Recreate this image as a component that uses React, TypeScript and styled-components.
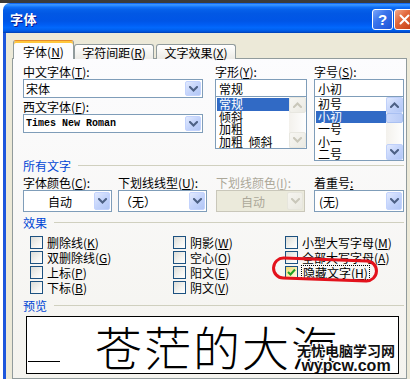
import React from "react";
import styled, { createGlobalStyle, css } from "styled-components";

const FONT = `"Noto Sans CJK SC", "Noto Sans", sans-serif`;

const GlobalStyle = createGlobalStyle`
  html, body { margin: 0; padding: 0; background: #ffffff; }
  body { font-family: ${FONT}; font-size: 12px; color: #000; }
  #root { width: 410px; height: 379px; overflow: hidden; }
  * { box-sizing: border-box; }
`;

const Screen = styled.div`
  display: flex;
  width: 410px;
  height: 379px;
  overflow: hidden;
  border-top: 3px solid #3b3b3b;
  background: #fff;
`;

const Backdrop = styled.div`
  flex: 0 0 3px;
  background: #fff;
`;

const Window = styled.div`
  flex: 0 0 420px;
  display: flex;
  flex-direction: column;
`;

const TitleBar = styled.div`
  flex: 0 0 30px;
  display: flex;
  align-items: center;
  padding: 0 8px 0 7px;
  border-radius: 7px 7px 0 0;
  background: linear-gradient(
    to bottom,
    #0058ee 0%,
    #3a93ff 5%,
    #2b8aff 9%,
    #1070f8 14%,
    #0660ea 22%,
    #0258e4 35%,
    #0055e6 60%,
    #005df3 72%,
    #0268fc 82%,
    #0060ef 90%,
    #0050d4 96%,
    #003cae 100%
  );
`;

const Title = styled.span`
  color: #fff;
  font: bold 13px ${FONT};
  text-shadow: 1px 1px 0 #0a1a8f;
  letter-spacing: 0.5px;
`;

const Caption = styled.div`
  margin-left: auto;
  display: flex;
  gap: 1px;
  margin-top: 2px;
`;

const CaptionButton = styled.div<{ $kind: "help" | "close" }>`
  width: 21px;
  height: 21px;
  border: 1px solid #ffffff;
  border-radius: 3px;
  display: flex;
  align-items: center;
  justify-content: center;
  color: #fff;
  font: bold 15px "Liberation Sans", sans-serif;
  background: ${(p) =>
    p.$kind === "help"
      ? "linear-gradient(135deg, #7aa6fa 0%, #3a74ec 40%, #1d52d6 100%)"
      : "linear-gradient(135deg, #f3a88a 0%, #e2673a 40%, #c23b12 100%)"};
`;

const Body = styled.div`
  flex: 1;
  background: #ece9d8;
  border-left: 3px solid #1d57dc;
  padding: 7px 0 0 6px;
  display: flex;
  flex-direction: column;
`;

const TabStrip = styled.div`
  display: flex;
  align-items: flex-end;
  height: 19px;
  padding-left: 1px;
  margin-bottom: -1px;
  position: relative;
  z-index: 1;
`;

const Tab = styled.div<{ $active?: boolean; $w: number; $gap?: number }>`
  width: ${(p) => p.$w}px;
  margin-left: ${(p) => p.$gap ?? 0}px;
  display: flex;
  align-items: center;
  justify-content: center;
  border: 1px solid #919b9c;
  border-bottom: none;
  border-radius: 3px 3px 0 0;
  white-space: nowrap;
  line-height: 13px;
  ${(p) =>
    p.$active
      ? css`
          height: 19px;
          padding-top: 2px;
          background: #fcfcfe;
          border-top: 1px solid #e68b2c;
          box-shadow: inset 0 2px 0 #ffc73c;
        `
      : css`
          height: 15px;
          background: linear-gradient(#ffffff, #ecebe6);
        `}
`;

const Key = styled.span`
  text-decoration: underline;
`;

const Panel = styled.div`
  width: 395px;
  flex: 1;
  border: 1px solid #919b9c;
  background: linear-gradient(#fcfcfe, #f4f3ee);
  padding: 6px 2px 0 10px;
  display: flex;
  flex-direction: column;
`;

const Row = styled.div`
  display: flex;
  align-items: flex-start;
`;

const Col = styled.div<{ $w: number; $mr?: number }>`
  flex: 0 0 ${(p) => p.$w}px;
  width: ${(p) => p.$w}px;
  margin-right: ${(p) => p.$mr ?? 0}px;
  display: flex;
  flex-direction: column;
`;

const Label = styled.div<{ $disabled?: boolean; $mt?: number }>`
  height: 13px;
  line-height: 13px;
  margin-top: ${(p) => p.$mt ?? 0}px;
  margin-bottom: 1px;
  color: ${(p) => (p.$disabled ? "#aca899" : "#000")};
  white-space: nowrap;
`;

const Combo = styled.div<{ $h: number; $disabled?: boolean }>`
  height: ${(p) => p.$h}px;
  display: flex;
  align-items: stretch;
  border: 1px solid ${(p) => (p.$disabled ? "#c9c7ba" : "#7f9db9")};
  background: ${(p) => (p.$disabled ? "#ebeadb" : "#fff")};
  padding: 1px;
`;

const ComboValue = styled.div<{ $center?: boolean; $mono?: boolean; $disabled?: boolean; $pl?: number }>`
  flex: 1;
  display: flex;
  align-items: center;
  justify-content: ${(p) => (p.$center ? "center" : "flex-start")};
  padding-left: ${(p) => p.$pl ?? 1}px;
  white-space: nowrap;
  color: ${(p) => (p.$disabled ? "#aca899" : "#000")};
  ${(p) =>
    p.$mono &&
    css`
      font-family: "Liberation Mono", monospace;
      font-size: 10px;
      font-weight: bold;
    `}
`;

const DropButton = styled.div<{ $disabled?: boolean }>`
  width: 16px;
  display: flex;
  align-items: center;
  justify-content: center;
  border-radius: 2px;
  border: 1px solid ${(p) => (p.$disabled ? "#e6e5dc" : "#c3d3fd")};
  background: ${(p) =>
    p.$disabled
      ? "linear-gradient(135deg, #f6f5f0, #e9e8e0)"
      : "linear-gradient(135deg, #e2eafe 0%, #c4d4fb 50%, #b1c6f5 100%)"};
`;

const TextBox = styled.div`
  height: 18px;
  border: 1px solid #7f9db9;
  background: #fff;
  display: flex;
  align-items: center;
  padding-left: 3px;
`;

const ListBox = styled.div<{ $h: number }>`
  height: ${(p) => p.$h}px;
  border: 1px solid #7f9db9;
  border-top: none;
  background: #fff;
  display: flex;
  padding: 0 0 0 1px;
  overflow: hidden;
`;

const Items = styled.div`
  flex: 1;
  display: flex;
  flex-direction: column;
  padding-top: 1px;
`;

const Item = styled.div<{ $selected?: boolean }>`
  height: 12.5px;
  line-height: 12.5px;
  padding-left: 2px;
  white-space: pre;
  background: ${(p) => (p.$selected ? "#316ac5" : "transparent")};
  color: ${(p) => (p.$selected ? "#fff" : "#000")};
`;

const ScrollBar = styled.div`
  width: 17px;
  display: flex;
  flex-direction: column;
  background: linear-gradient(to right, #f3f1ec, #fefefe);
`;

const ScrollArrow = styled.div<{ $disabled?: boolean }>`
  height: 16px;
  flex: 0 0 16px;
  display: flex;
  align-items: center;
  justify-content: center;
  border-radius: 2px;
  border: 1px solid ${(p) => (p.$disabled ? "#e8e7e0" : "#bfd0fa")};
  background: ${(p) =>
    p.$disabled
      ? "linear-gradient(135deg, #f7f6f2, #ebeae3)"
      : "linear-gradient(135deg, #e2eafe 0%, #c4d4fb 50%, #b1c6f5 100%)"};
`;

const ScrollThumb = styled.div`
  height: 10px;
  border-radius: 2px;
  border: 1px solid #a9c0f2;
  background: linear-gradient(to right, #cad8fb, #b9cbf6);
`;

const ScrollTrack = styled.div`
  flex: 1;
`;

const Heading = styled.div<{ $mt: number }>`
  display: flex;
  align-items: center;
  height: 13px;
  line-height: 13px;
  margin-top: ${(p) => p.$mt}px;
  color: #0046d5;
  white-space: nowrap;
`;

const HeadingRule = styled.div`
  flex: 1;
  height: 1px;
  margin-left: 7px;
  background: #d0d0bf;
`;

const EffectsGrid = styled.div`
  display: grid;
  grid-template-columns: 143px 112px 1fr;
  grid-template-rows: repeat(4, 15px);
  grid-auto-flow: column;
  margin-top: 6px;
  padding-left: 7px;
`;

const CheckItem = styled.div`
  position: relative;
  display: flex;
  align-items: center;
  gap: 4px;
  white-space: nowrap;
  line-height: 13px;
`;

const Box = styled.span<{ $checked?: boolean }>`
  flex: 0 0 13px;
  width: 13px;
  height: 13px;
  border: 1px solid #1c5180;
  display: flex;
  align-items: center;
  justify-content: center;
  background: ${(p) =>
    p.$checked
      ? "linear-gradient(135deg, #f2d86c 0%, #fbf2c0 60%, #fffbe6 100%)"
      : "linear-gradient(135deg, #dcdcd7 0%, #f4f4f1 60%, #ffffff 100%)"};
`;

const Focus = styled.span`
  outline: 1px dotted #000;
  outline-offset: 0px;
  padding: 0 1px;
`;

const RedMark = styled.div`
  position: absolute;
  left: -13px;
  top: -7px;
  width: 106px;
  height: 23px;
  border: 3px solid #e3121c;
  border-radius: 12px;
  transform: rotate(2deg);
  pointer-events: none;
`;

const PreviewBox = styled.div`
  position: relative;
  margin: 4px 0 0 3px;
  width: 373px;
  height: 58px;
  border: 1px solid #000;
  background: #fff;
  display: flex;
  align-items: center;
  padding-left: 1px;
  overflow: hidden;
`;

const UnderlineStub = styled.span`
  align-self: flex-end;
  width: 32px;
  height: 1px;
  margin-bottom: 11px;
  background: #000;
`;

const PreviewText = styled.span`
  margin-left: 35px;
  font: 300 47px/1 ${FONT};
  letter-spacing: 2px;
  color: #000;
  white-space: nowrap;
`;

const Watermark = styled.div`
  position: absolute;
  right: 0px;
  top: 25px;
  width: 104px;
  display: flex;
  flex-direction: column;
  align-items: center;
  text-shadow: 1px 1px 0 #fff, -1px -1px 0 #fff, 1px -1px 0 #fff, -1px 1px 0 #fff, 0 0 3px #fff;
`;

const WatermarkCn = styled.span`
  font: bold 14px/16px ${FONT};
  color: #111;
  white-space: nowrap;
`;

const WatermarkEn = styled.span`
  font: bold 16px/15px "Liberation Sans", sans-serif;
  color: #111;
  white-space: nowrap;
`;

const Chevron = ({ color = "#4d6185", up = false }: { color?: string; up?: boolean }) => (
  <svg width="9" height="6" viewBox="0 0 9 6">
    <path
      d={up ? "M1 5 L4.5 1.5 L8 5" : "M1 1 L4.5 4.5 L8 1"}
      fill="none"
      stroke={color}
      strokeWidth="2"
      strokeLinecap="square"
    />
  </svg>
);

const CheckMark = () => (
  <svg width="9" height="9" viewBox="0 0 9 9">
    <path d="M1 4 L3.5 6.5 L8 1.5" fill="none" stroke="#21a121" strokeWidth="2" />
  </svg>
);

const CloseGlyph = () => (
  <svg width="11" height="11" viewBox="0 0 11 11">
    <path d="M1.5 1.5 L9.5 9.5 M9.5 1.5 L1.5 9.5" stroke="#fff" strokeWidth="2" strokeLinecap="round" />
  </svg>
);

type ComboProps = {
  value: React.ReactNode;
  h: number;
  center?: boolean;
  mono?: boolean;
  disabled?: boolean;
  pl?: number;
};

const ComboField = ({ value, h, center, mono, disabled, pl }: ComboProps) => (
  <Combo $h={h} $disabled={disabled}>
    <ComboValue $center={center} $mono={mono} $disabled={disabled} $pl={pl}>
      {value}
    </ComboValue>
    <DropButton $disabled={disabled}>
      <Chevron color={disabled ? "#c9c7ba" : "#4d6185"} />
    </DropButton>
  </Combo>
);

const Check = ({
  label,
  k,
  checked,
  focus,
  mark,
}: {
  label: string;
  k: string;
  checked?: boolean;
  focus?: boolean;
  mark?: boolean;
}) => {
  const text = (
    <>
      {label}(<Key>{k}</Key>)
    </>
  );
  return (
    <CheckItem>
      <Box $checked={checked}>{checked && <CheckMark />}</Box>
      {focus ? <Focus>{text}</Focus> : <span>{text}</span>}
      {mark && <RedMark />}
    </CheckItem>
  );
};

export default function App() {
  return (
    <>
      <GlobalStyle />
      <Screen>
        <Backdrop />
        <Window>
          <TitleBar>
            <Title>字体</Title>
            <Caption>
              <CaptionButton $kind="help">?</CaptionButton>
              <CaptionButton $kind="close">
                <CloseGlyph />
              </CaptionButton>
            </Caption>
          </TitleBar>
          <Body>
            <TabStrip>
              <Tab $active $w={61}>
                字体(<Key>N</Key>)
              </Tab>
              <Tab $w={80}>
                字符间距(<Key>R</Key>)
              </Tab>
              <Tab $w={80} $gap={2}>
                文字效果(<Key>X</Key>)
              </Tab>
            </TabStrip>
            <Panel>
              <Row>
                <Col $w={180} $mr={12}>
                  <Label>
                    中文字体(<Key>T</Key>):
                  </Label>
                  <ComboField h={19} value="宋体" />
                  <Label $mt={2}>
                    西文字体(<Key>F</Key>):
                  </Label>
                  <ComboField h={19} value="Times New Roman" mono pl={1} />
                </Col>
                <Col $w={92} $mr={7}>
                  <Label>
                    字形(<Key>Y</Key>):
                  </Label>
                  <TextBox>常规</TextBox>
                  <ListBox $h={52}>
                    <Items>
                      <Item $selected>常规</Item>
                      <Item>倾斜</Item>
                      <Item>加粗</Item>
                      <Item>{"加粗  倾斜"}</Item>
                    </Items>
                    <ScrollBar>
                      <ScrollArrow $disabled>
                        <Chevron up color="#c9c7ba" />
                      </ScrollArrow>
                      <ScrollTrack />
                      <ScrollArrow $disabled>
                        <Chevron color="#c9c7ba" />
                      </ScrollArrow>
                    </ScrollBar>
                  </ListBox>
                </Col>
                <Col $w={90}>
                  <Label>
                    字号(<Key>S</Key>):
                  </Label>
                  <TextBox>小初</TextBox>
                  <ListBox $h={64}>
                    <Items>
                      <Item>初号</Item>
                      <Item $selected>小初</Item>
                      <Item>一号</Item>
                      <Item>小一</Item>
                      <Item>二号</Item>
                    </Items>
                    <ScrollBar>
                      <ScrollArrow>
                        <Chevron up />
                      </ScrollArrow>
                      <ScrollThumb />
                      <ScrollTrack />
                      <ScrollArrow>
                        <Chevron />
                      </ScrollArrow>
                    </ScrollBar>
                  </ListBox>
                </Col>
              </Row>

              <Heading $mt={-2}>
                所有文字
                <HeadingRule />
              </Heading>
              <Row>
                <Col $w={89} $mr={6}>
                  <Label $mt={4}>
                    字体颜色(<Key>C</Key>):
                  </Label>
                  <ComboField h={22} value="自动" center />
                </Col>
                <Col $w={89} $mr={9}>
                  <Label $mt={4}>
                    下划线线型(<Key>U</Key>):
                  </Label>
                  <ComboField h={22} value="（无）" pl={0} />
                </Col>
                <Col $w={89} $mr={9}>
                  <Label $mt={4} $disabled>
                    下划线颜色(<Key>I</Key>):
                  </Label>
                  <ComboField h={22} value="自动" center disabled />
                </Col>
                <Col $w={90}>
                  <Label $mt={4}>
                    着重号<Key>:</Key>
                  </Label>
                  <ComboField h={22} value="(无)" pl={3} />
                </Col>
              </Row>

              <Heading $mt={4}>
                效果
                <HeadingRule />
              </Heading>
              <EffectsGrid>
                <Check label="删除线" k="K" />
                <Check label="双删除线" k="G" />
                <Check label="上标" k="P" />
                <Check label="下标" k="B" />
                <Check label="阴影" k="W" />
                <Check label="空心" k="O" />
                <Check label="阳文" k="E" />
                <Check label="阴文" k="V" />
                <Check label="小型大写字母" k="M" />
                <Check label="全部大写字母" k="A" />
                <Check label="隐藏文字" k="H" checked focus mark />
              </EffectsGrid>

              <Heading $mt={4}>
                预览
                <HeadingRule />
              </Heading>
              <PreviewBox>
                <UnderlineStub />
                <PreviewText>苍茫的大海</PreviewText>
                <Watermark>
                  <WatermarkCn>无忧电脑学习网</WatermarkCn>
                  <WatermarkEn>wypcw.com</WatermarkEn>
                </Watermark>
              </PreviewBox>
            </Panel>
          </Body>
        </Window>
      </Screen>
    </>
  );
}
